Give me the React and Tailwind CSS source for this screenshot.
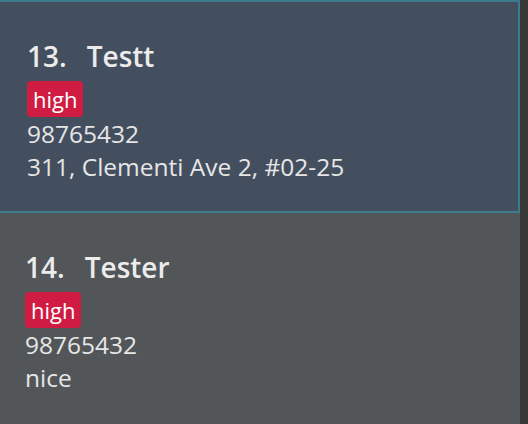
import React from 'react';

const people = [
    { id: 13, name: 'Testt', tag: 'high', phone: '98765432', extra: '311, Clementi Ave 2, #02-25', selected: true },
    { id: 14, name: 'Tester', tag: 'high', phone: '98765432', extra: 'nice', selected: false },
];

function PersonCard({ person }) {
    const cardClass = person.selected
        ? 'h-[213px] shrink-0 bg-[#434e5f] border-t-2 border-r-2 border-b-2 border-[#3c7a8d] pl-[27px] pt-[35px]'
        : 'h-[213px] shrink-0 bg-[#525659] pl-[25px] pt-[35px]';

    return (
        <div className={cardClass}>
            <div className="flex items-baseline text-[28px] leading-[38px] font-semibold text-[#ececec]">
                <span>{person.id}.</span>
                <span className="ml-[20px]">{person.name}</span>
            </div>
            <div className="mt-[6px] flex">
                <span className="rounded-[4px] bg-[#d01b43] px-[6px] text-[22px] leading-[36px] text-white">
                    {person.tag}
                </span>
            </div>
            <div className="text-[24.5px] leading-[33px] text-[#e6e6e6]">{person.phone}</div>
            <div className="text-[24.5px] leading-[33px] text-[#e6e6e6]">{person.extra}</div>
        </div>
    );
}

export default function App() {
    return (
        <div
            className="flex h-[424px] w-[528px] overflow-hidden bg-[#383838]"
            style={{ fontFamily: '"Open Sans", "Noto Sans", sans-serif' }}
        >
            <div className="flex w-[520px] flex-col">
                {people.map((p) => (
                    <PersonCard key={p.id} person={p} />
                ))}
            </div>
        </div>
    );
}
